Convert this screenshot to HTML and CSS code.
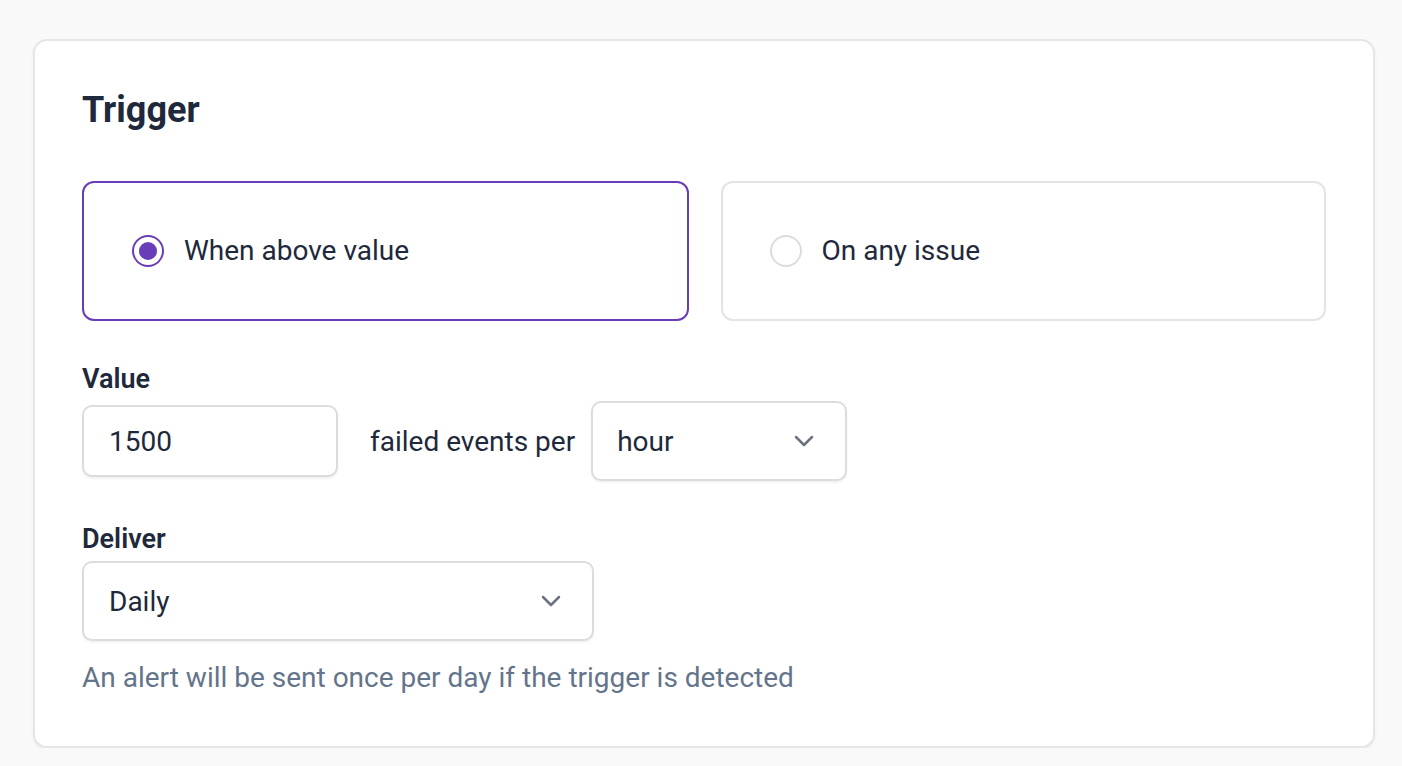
FILE: index.html
```html
<!DOCTYPE html>
<html lang="en">
<head>
<meta charset="utf-8">
<title>Trigger</title>
<link rel="stylesheet" href="styles.css">
</head>
<body>
<div class="page">
  <section class="card">
    <h2 class="title">Trigger</h2>
    <div class="options">
      <label class="option option--selected">
        <span class="radio radio--on"><span class="radio-dot"></span></span>
        <span class="option-text">When above value</span>
      </label>
      <label class="option">
        <span class="radio"></span>
        <span class="option-text">On any issue</span>
      </label>
    </div>

    <div class="field field--value">
      <div class="label">Value</div>
      <div class="value-row">
        <div class="input">1500</div>
        <span class="inline-text">failed events per</span>
        <div class="select select--hour">
          <span>hour</span>
          <svg class="chevron" viewBox="0 0 20 12" width="20" height="12"><path d="M2 2 L10 10 L18 2" fill="none" stroke="#6b7280" stroke-width="2.5" stroke-linecap="round" stroke-linejoin="round"/></svg>
        </div>
      </div>
    </div>

    <div class="field field--deliver">
      <div class="label">Deliver</div>
      <div class="select select--deliver">
        <span>Daily</span>
        <svg class="chevron" viewBox="0 0 20 12" width="20" height="12"><path d="M2 2 L10 10 L18 2" fill="none" stroke="#6b7280" stroke-width="2.5" stroke-linecap="round" stroke-linejoin="round"/></svg>
      </div>
      <p class="help">An alert will be sent once per day if the trigger is detected</p>
    </div>
  </section>
</div>
</body>
</html>
```

FILE: styles.css
```css
* { box-sizing: border-box; }
html, body { margin: 0; padding: 0; }
body {
  background: #f9f9fa;
  font-family: Roboto, "Liberation Sans", sans-serif;
  color: #1e293b;
}
.page {
  padding: 39px 27px 0 33px;
}
.card {
  width: 1342px;
  height: 709px;
  background: #fff;
  border: 2px solid #e6e6ea;
  border-radius: 14px;
  box-shadow: 0 2px 3px rgba(0,0,0,0.06);
  padding: 47px 47px 49px 47px;
}
.title {
  margin: 0;
  font-size: 36px;
  line-height: 44px;
  font-weight: 700;
  color: #1e293b;
}
.options {
  display: flex;
  gap: 32px;
  margin-top: 49px;
}
.option {
  flex: 1;
  height: 140px;
  border: 2px solid #e4e4e7;
  border-radius: 12px;
  display: flex;
  align-items: center;
  padding-left: 48px;
}
.option--selected {
  border-color: #6a3db8;
}
.option + .option { padding-left: 47px; }
.radio {
  width: 32px;
  height: 32px;
  border-radius: 50%;
  border: 2px solid #dcdcdf;
  display: flex;
  align-items: center;
  justify-content: center;
  flex: none;
}
.radio--on { border: 2.5px solid #6a3db8; }
.radio-dot {
  width: 18px;
  height: 18px;
  border-radius: 50%;
  background: #6a3db8;
}
.option-text {
  margin-left: 20px;
  font-size: 28px;
  line-height: 34px;
}
.field--value { margin-top: 41px; }
.field--deliver { margin-top: 41px; }
.label {
  font-size: 27px;
  line-height: 34px;
  font-weight: 600;
}
.value-row {
  display: flex;
  align-items: center;
  margin-top: 5px;
}
.input, .select {
  background: #fff;
  border: 2px solid #dcdcdf;
  border-radius: 10px;
  box-shadow: 0 2px 2px rgba(0,0,0,0.05);
  font-size: 28px;
  display: flex;
  align-items: center;
}
.input {
  width: 256px;
  height: 72px;
  padding-left: 25px;
}
.inline-text {
  margin: 0 16px 0 32px;
  font-size: 28px;
}
.select {
  height: 80px;
  justify-content: space-between;
  padding-left: 24px;
}
.select--hour {
  width: 256px;
  flex: none;
  padding-right: 31px;
}
.select--deliver {
  width: 512px;
  margin-top: 5px;
  padding-left: 25px;
  padding-right: 31px;
}
.chevron { display: block; }
.help {
  margin: 20px 0 0;
  font-size: 28px;
  line-height: 34px;
  color: #64748b;
}
```
